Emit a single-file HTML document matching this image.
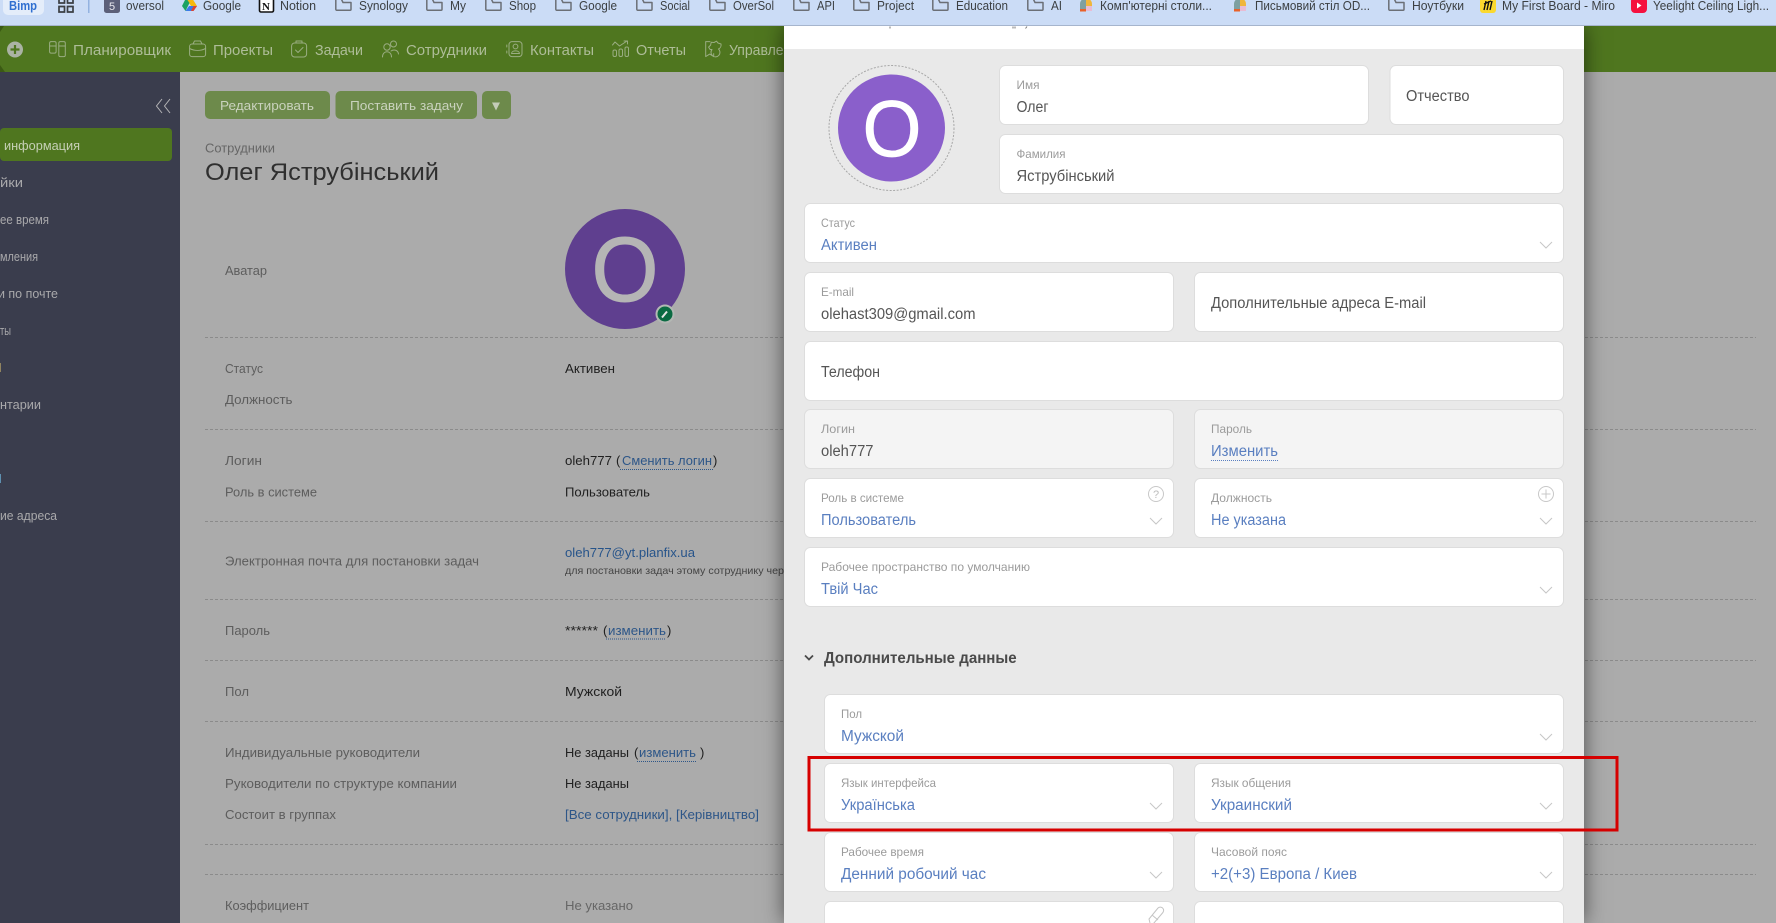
<!DOCTYPE html>
<html lang="ru">
<head>
<meta charset="utf-8">
<title>Сотрудник</title>
<style>
html,body{margin:0;padding:0;width:1776px;height:923px;overflow:hidden;background:#ababab}
svg{position:absolute;left:0;top:0;display:block}
text{font-family:"Liberation Sans","Noto Sans CJK SC",sans-serif}
#modal{position:absolute;left:784px;top:26px;width:800px;height:897px;background:#e9e9e9;box-shadow:0 0 20px rgba(0,0,0,.55)}
.bm{font-size:12.5px;fill:#3c4043}
.nav{font-size:15px;fill:#aebd98}
.ni{fill:none;stroke:#9aad82;stroke-width:1;stroke-linecap:round;stroke-linejoin:round}
.side{font-size:13px;fill:#a9a9ab}
.lab{font-size:13px;fill:#5d5d5d}
.val{font-size:13px;fill:#202020}
.lnk{font-size:13px;fill:#2d5688}
.f{fill:#fff;stroke:#dddddd;stroke-width:1}
.d{fill:#f4f4f4;stroke:#dddddd;stroke-width:1}
.fl{font-size:12px;fill:#9b9b9b}
.fv{font-size:15.5px;fill:#555}
.fb{font-size:15.5px;fill:#5a7fc0}
.ch{fill:none;stroke:#c6c6c6;stroke-width:1}
.dash{stroke:#8b8b8b;stroke-width:1;stroke-dasharray:3 2}
.fo{fill:none;stroke:#6b6f76;stroke-width:1.5;stroke-linejoin:round}
</style>
</head>
<body>
<svg width="1776" height="923" viewBox="0 0 1776 923">
<rect x="0" y="26" width="1776" height="46" fill="#4f761f"/>
<path d="M0 26h4l-4 6zM0 72h5l-5-7z" fill="#3b5a14"/>
<rect x="0" y="72" width="180" height="851" fill="#3a3d4d"/>
<circle cx="15" cy="49.5" r="8" fill="#abb3a4"/>
<path d="M15 45v9M10.500 49.500h9" stroke="#4f761f" stroke-width="2.200"/>

<g class="ni">
<rect x="49.600" y="41.600" width="6.500" height="11.500" rx="1.500"/><path d="M49.600 46h6.500"/>
<rect x="58.800" y="41.600" width="6.500" height="15" rx="1.500"/><path d="M58.800 46h6.500"/>
<path d="M193 44l1.500-3h6l1.500 3"/><rect x="189.600" y="44" width="16" height="12.600" rx="2.500"/><path d="M189.600 48.500c5 2.500 11 2.500 16 0"/>
<rect x="291.600" y="43" width="15" height="14" rx="3"/><path d="M296 43v-2h6v2M295.500 50l2.500 2.500 5-5"/>
<circle cx="393.500" cy="44" r="3"/><path d="M391 51c3-2 7-1 7.500 3"/><circle cx="387" cy="47" r="3.200"/><path d="M382.500 57c0-7 9-7 9 0"/>
<rect x="509" y="41.600" width="13" height="15" rx="3"/><circle cx="515.500" cy="46.500" r="2.400"/><path d="M511.500 53.500c0-3.500 8-3.500 8 0zM506.800 45v2M506.800 51v2"/>
<rect x="613" y="50" width="3.500" height="6.500" rx="1.500"/><rect x="619" y="49" width="3.500" height="7.500" rx="1.500"/><rect x="625" y="47" width="3.500" height="9.500" rx="1.500"/><path d="M612.500 45l2.500-3 4.500 4 7.500-5M624 41h3.500v3"/>
<path d="M710 41.600h-4.300v15l4-2.500 4 2.500v-3M712 49.500a4.500 4.500 0 1 0 6.500-.5 4.500 4.500 0 0 0 2.500-5l-3-1-1.500-1.800-2.500 1.300-2.800-.2-.6 2.800-2 2 1.500 2.400z"/>
</g>
<text class="nav" x="73" y="55" textLength="98" lengthAdjust="spacingAndGlyphs">Планировщик</text>
<text class="nav" x="213" y="55" textLength="60" lengthAdjust="spacingAndGlyphs">Проекты</text>
<text class="nav" x="315" y="55" textLength="48" lengthAdjust="spacingAndGlyphs">Задачи</text>
<text class="nav" x="406" y="55" textLength="81" lengthAdjust="spacingAndGlyphs">Сотрудники</text>
<text class="nav" x="530" y="55" textLength="64" lengthAdjust="spacingAndGlyphs">Контакты</text>
<text class="nav" x="636" y="55" textLength="50" lengthAdjust="spacingAndGlyphs">Отчеты</text>
<text class="nav" x="729" y="55" textLength="78" lengthAdjust="spacingAndGlyphs">Управление</text>

<path d="M162 99l-5.500 7 5.500 7M170 99l-5.500 7 5.500 7" fill="none" stroke="#b4b4b6" stroke-width="1"/>
<rect x="0" y="128" width="172" height="33" rx="4" fill="#4f761f"/>
<text class="side" x="4" y="150" textLength="76" lengthAdjust="spacingAndGlyphs" style="fill:#c6d0b6">информация</text>
<text class="side" x="0" y="187" textLength="23" lengthAdjust="spacingAndGlyphs">йки</text>
<text class="side" x="0" y="224" textLength="49" lengthAdjust="spacingAndGlyphs">ее время</text>
<text class="side" x="0" y="261" textLength="38" lengthAdjust="spacingAndGlyphs">мления</text>
<text class="side" x="-2" y="298" textLength="60" lengthAdjust="spacingAndGlyphs">и по почте</text>
<text class="side" x="0" y="335" textLength="11" lengthAdjust="spacingAndGlyphs">ты</text>
<rect x="0" y="363" width="1" height="9" fill="#8f8360"/>
<text class="side" x="0" y="409" textLength="41" lengthAdjust="spacingAndGlyphs">нтарии</text>
<rect x="0" y="474" width="1" height="9" fill="#5e90b0"/>
<text class="side" x="0" y="520" textLength="57" lengthAdjust="spacingAndGlyphs">ие адреса</text>

<rect x="205" y="91" width="125" height="28" rx="5" fill="#6d8a4b"/>
<rect x="335.500" y="91" width="141.500" height="28" rx="5" fill="#6d8a4b"/>
<rect x="482" y="91" width="29" height="28" rx="5" fill="#6d8a4b"/>
<text x="220" y="110" font-size="13" fill="#c9d2bd" textLength="94" lengthAdjust="spacingAndGlyphs">Редактировать</text>
<text x="350" y="110" font-size="13" fill="#c9d2bd" textLength="113" lengthAdjust="spacingAndGlyphs">Поставить задачу</text>
<path d="M492 102.500h8l-4 8z" fill="#c4ccb8"/>
<text x="205" y="152.500" font-size="13" fill="#666" textLength="70" lengthAdjust="spacingAndGlyphs">Сотрудники</text>
<text x="205" y="180" font-size="24.500" fill="#2f2f2f" textLength="234" lengthAdjust="spacingAndGlyphs">Олег Яструбінський</text>

<circle cx="625" cy="269" r="60" fill="#5f3f8f"/>
<text x="625" y="301" font-size="92" fill="#b5b5b5" stroke="#b5b5b5" stroke-width="1" text-anchor="middle" textLength="67" lengthAdjust="spacingAndGlyphs">O</text>
<circle cx="665" cy="314" r="9.500" fill="#b3b8b4"/>
<circle cx="665" cy="314" r="7.500" fill="#0a6a42"/>
<path d="M662 317.500l5-6" stroke="#e5e5e5" stroke-width="2"/>

<g class="dash">
<path d="M205 337.500H1756M205 429.500H1756M205 521.500H1756M205 599.500H1756M205 660.500H1756M205 721.500H1756M205 844.500H1756M205 874.500H1756"/>
</g>
<text class="lab" x="225" y="275" textLength="42" lengthAdjust="spacingAndGlyphs">Аватар</text>
<text class="lab" x="225" y="373" textLength="38" lengthAdjust="spacingAndGlyphs">Статус</text>
<text class="lab" x="225" y="404" textLength="67.500" lengthAdjust="spacingAndGlyphs">Должность</text>
<text class="lab" x="225" y="465" textLength="37" lengthAdjust="spacingAndGlyphs">Логин</text>
<text class="lab" x="225" y="496.500" textLength="92" lengthAdjust="spacingAndGlyphs">Роль в системе</text>
<text class="lab" x="225" y="565.500" textLength="254" lengthAdjust="spacingAndGlyphs">Электронная почта для постановки задач</text>
<text class="lab" x="225" y="635" textLength="45" lengthAdjust="spacingAndGlyphs">Пароль</text>
<text class="lab" x="225" y="696" textLength="24" lengthAdjust="spacingAndGlyphs">Пол</text>
<text class="lab" x="225" y="757" textLength="195" lengthAdjust="spacingAndGlyphs">Индивидуальные руководители</text>
<text class="lab" x="225" y="788" textLength="232" lengthAdjust="spacingAndGlyphs">Руководители по структуре компании</text>
<text class="lab" x="225" y="819" textLength="111" lengthAdjust="spacingAndGlyphs">Состоит в группах</text>
<text class="lab" x="225" y="910" textLength="84" lengthAdjust="spacingAndGlyphs">Коэффициент</text>

<text class="val" x="565" y="373" textLength="50" lengthAdjust="spacingAndGlyphs">Активен</text>
<text class="val" x="565" y="465" textLength="47" lengthAdjust="spacingAndGlyphs">oleh777</text>
<text class="val" x="616" y="465">(</text>
<text class="lnk" x="622" y="465" textLength="90" lengthAdjust="spacingAndGlyphs">Сменить логин</text>
<path d="M620 469.500h93" stroke="#2d5688" stroke-width="1" stroke-dasharray="1 1"/>
<text class="val" x="713" y="465">)</text>
<text class="val" x="565" y="496.500" textLength="85" lengthAdjust="spacingAndGlyphs">Пользователь</text>
<text class="lnk" x="565" y="557" textLength="130" lengthAdjust="spacingAndGlyphs" style="fill:#27548a">oleh777@yt.planfix.ua</text>
<text x="565" y="574" font-size="10.500" fill="#444" textLength="219" lengthAdjust="spacingAndGlyphs">для постановки задач этому сотруднику чер</text>
<text class="val" x="565" y="635" textLength="33" lengthAdjust="spacingAndGlyphs">******</text>
<text class="val" x="603" y="635">(</text>
<text class="lnk" x="608" y="635" textLength="58" lengthAdjust="spacingAndGlyphs">изменить</text>
<path d="M606 639h60" stroke="#2d5688" stroke-width="1" stroke-dasharray="1 1"/>
<text class="val" x="667" y="635">)</text>
<text class="val" x="565" y="696" textLength="57" lengthAdjust="spacingAndGlyphs">Мужской</text>
<text class="val" x="565" y="757" textLength="64" lengthAdjust="spacingAndGlyphs">Не заданы</text>
<text class="val" x="634" y="757">(</text>
<text class="lnk" x="639" y="757" textLength="57" lengthAdjust="spacingAndGlyphs">изменить</text>
<path d="M637 761.500h59" stroke="#2d5688" stroke-width="1" stroke-dasharray="1 1"/>
<text class="val" x="700" y="757">)</text>
<text class="val" x="565" y="788" textLength="64" lengthAdjust="spacingAndGlyphs">Не заданы</text>
<text class="lnk" x="565" y="819" textLength="194" lengthAdjust="spacingAndGlyphs">[Все сотрудники], [Керівництво]</text>
<text class="val" x="565" y="910" textLength="68" lengthAdjust="spacingAndGlyphs" style="fill:#666">Не указано</text>
</svg>

<div id="modal"></div>

<svg width="1776" height="923" viewBox="0 0 1776 923">
<defs>
<g id="folder"><path class="fo" d="M.8-2V9.300a1 1 0 0 0 1 1H15a1 1 0 0 0 1-1V2.500H8L5.800-2"/></g>
<path id="chev" class="ch" d="M0 0l6 6 6-6"/>
</defs>

<rect x="0" y="0" width="1776" height="25" fill="#cbdcf6"/>
<rect x="0" y="25" width="1776" height="1" fill="#a6b5cd"/>
<rect x="3" y="-6" width="41" height="21" rx="5" fill="#e4edfa"/>
<text x="9" y="10" font-size="12.500" font-weight="bold" fill="#2f6fd0" textLength="28" lengthAdjust="spacingAndGlyphs">Bimp</text>
<path d="M59-2h5.500v5H59zM67.500-2H73v5h-5.500zM59 6.500h5.500V12H59zM67.500 6.500H73V12h-5.500z" fill="none" stroke="#3b3f44" stroke-width="1.700"/>
<rect x="88" y="0" width="1.500" height="13" fill="#93b2e0"/>
<rect x="104" y="-4" width="16" height="17" rx="2.500" fill="#5c6079"/>
<text x="109" y="10" font-size="11" fill="#e8e8ee">5</text>
<text class="bm" x="126" y="10" textLength="38" lengthAdjust="spacingAndGlyphs">oversol</text>
<path d="M186-2h6l5 8h-6z" fill="#f6b90f"/><path d="M186-2l-4 8 3.500 5 4-8z" fill="#1ca261"/><path d="M185.500 11h8l3.500-5h-8z" fill="#3b7be8"/><path d="M191 11h2.500l3.500-5h-3.500z" fill="#e0432f"/>
<text class="bm" x="203" y="10" textLength="38" lengthAdjust="spacingAndGlyphs">Google</text>
<rect x="259.500" y="-2" width="14" height="14" rx="1.500" fill="#fff" stroke="#111" stroke-width="1.600"/>
<text x="262" y="10" font-size="11" font-weight="bold" fill="#111" style="font-family:'Liberation Serif',serif">N</text>
<text class="bm" x="280" y="10" textLength="36" lengthAdjust="spacingAndGlyphs">Notion</text>

<use href="#folder" x="335" y="0"/><text class="bm" x="359" y="10" textLength="49" lengthAdjust="spacingAndGlyphs">Synology</text>
<use href="#folder" x="426" y="0"/><text class="bm" x="450" y="10" textLength="16" lengthAdjust="spacingAndGlyphs">My</text>
<use href="#folder" x="485" y="0"/><text class="bm" x="509" y="10" textLength="27" lengthAdjust="spacingAndGlyphs">Shop</text>
<use href="#folder" x="555" y="0"/><text class="bm" x="579" y="10" textLength="38" lengthAdjust="spacingAndGlyphs">Google</text>
<use href="#folder" x="636" y="0"/><text class="bm" x="660" y="10" textLength="30" lengthAdjust="spacingAndGlyphs">Social</text>
<use href="#folder" x="709" y="0"/><text class="bm" x="733" y="10" textLength="41" lengthAdjust="spacingAndGlyphs">OverSol</text>
<use href="#folder" x="793" y="0"/><text class="bm" x="817" y="10" textLength="18" lengthAdjust="spacingAndGlyphs">API</text>
<use href="#folder" x="853" y="0"/><text class="bm" x="877" y="10" textLength="37" lengthAdjust="spacingAndGlyphs">Project</text>
<use href="#folder" x="932" y="0"/><text class="bm" x="956" y="10" textLength="52" lengthAdjust="spacingAndGlyphs">Education</text>
<use href="#folder" x="1027" y="0"/><text class="bm" x="1051" y="10" textLength="11" lengthAdjust="spacingAndGlyphs">AI</text>
<g><path d="M1080 11V4a6 6 0 0 1 6-6v13z" fill="#7ea0a0"/><path d="M1086-2a6 6 0 0 1 6 6v2h-6z" fill="#efb63c"/><rect x="1086" y="6" width="6" height="5" fill="#e8bcd4"/><rect x="1080" y="9" width="6" height="2.500" fill="#e8622a"/></g>
<text class="bm" x="1100" y="10" textLength="112" lengthAdjust="spacingAndGlyphs">Комп'ютерні столи...</text>
<g><path d="M1234 11V4a6 6 0 0 1 6-6v13z" fill="#7ea0a0"/><path d="M1240-2a6 6 0 0 1 6 6v2h-6z" fill="#efb63c"/><rect x="1240" y="6" width="6" height="5" fill="#e8bcd4"/><rect x="1234" y="9" width="6" height="2.500" fill="#e8622a"/></g>
<text class="bm" x="1255" y="10" textLength="115" lengthAdjust="spacingAndGlyphs">Письмовий стіл OD...</text>
<use href="#folder" x="1388" y="0"/><text class="bm" x="1412" y="10" textLength="52" lengthAdjust="spacingAndGlyphs">Ноутбуки</text>
<rect x="1480" y="-3" width="16" height="16" rx="3" fill="#fbd92f"/>
<path d="M1484 10l2-9M1487 10l2-9M1490 10l2-9M1484 4l7-3" stroke="#111" stroke-width="1.400" fill="none"/>
<text class="bm" x="1502" y="10" textLength="113" lengthAdjust="spacingAndGlyphs">My First Board - Miro</text>
<rect x="1631" y="-3" width="16" height="16" rx="4" fill="#f5113f"/>
<path d="M1637 2.500l4.500 3-4.500 3z" fill="#fff"/>
<text class="bm" x="1653" y="10" textLength="116" lengthAdjust="spacingAndGlyphs">Yeelight Ceiling Ligh...</text>

<rect x="784" y="26" width="800" height="23" fill="#fff"/>
<path d="M890 26.500v2M1013 26.500v2M1015 26.500v2M1027 26.500l-1.500 2" stroke="#777" stroke-width="1"/>

<circle cx="891.500" cy="128" r="62.500" fill="none" stroke="#a8a8a8" stroke-width="1" stroke-dasharray="2 1.500"/>
<circle cx="891.500" cy="128" r="53.500" fill="#8a5fcb"/>
<text x="892" y="156" font-size="80" fill="#fff" stroke="#fff" stroke-width=".7" text-anchor="middle" textLength="59" lengthAdjust="spacingAndGlyphs">O</text>

<rect class="f" x="999.500" y="65.500" width="369" height="59" rx="6"/>
<rect class="f" x="1390" y="65.500" width="173.500" height="59" rx="6"/>
<rect class="f" x="999.500" y="134.500" width="564" height="59" rx="6"/>
<rect class="f" x="804.500" y="203.500" width="759" height="59" rx="6"/>
<rect class="f" x="804.500" y="272.500" width="369" height="59" rx="6"/>
<rect class="f" x="1194.500" y="272.500" width="369" height="59" rx="6"/>
<rect class="f" x="804.500" y="341.500" width="759" height="59" rx="6"/>
<rect class="d" x="804.500" y="409.500" width="369" height="59" rx="6"/>
<rect class="d" x="1194.500" y="409.500" width="369" height="59" rx="6"/>
<rect class="f" x="804.500" y="478.500" width="369" height="59" rx="6"/>
<rect class="f" x="1194.500" y="478.500" width="369" height="59" rx="6"/>
<rect class="f" x="804.500" y="547.500" width="759" height="59" rx="6"/>
<rect class="f" x="824.500" y="694.500" width="739" height="59" rx="6"/>
<rect class="f" x="824.500" y="763.500" width="349" height="59" rx="6"/>
<rect class="f" x="1194.500" y="763.500" width="369" height="59" rx="6"/>
<rect class="f" x="824.500" y="832.500" width="349" height="59" rx="6"/>
<rect class="f" x="1194.500" y="832.500" width="369" height="59" rx="6"/>
<rect class="f" x="824.500" y="901.500" width="349" height="59" rx="6"/>
<rect class="f" x="1194.500" y="901.500" width="369" height="59" rx="6"/>

<text class="fl" x="1016.500" y="89" textLength="23" lengthAdjust="spacingAndGlyphs">Имя</text>
<text class="fv" x="1016.500" y="112" textLength="32" lengthAdjust="spacingAndGlyphs">Олег</text>
<text class="fv" x="1406" y="101" textLength="63.500" lengthAdjust="spacingAndGlyphs">Отчество</text>
<text class="fl" x="1016.500" y="158" textLength="49" lengthAdjust="spacingAndGlyphs">Фамилия</text>
<text class="fv" x="1016.500" y="181" textLength="98" lengthAdjust="spacingAndGlyphs">Яструбінський</text>
<text class="fl" x="821" y="227" textLength="34" lengthAdjust="spacingAndGlyphs">Статус</text>
<text class="fb" x="821" y="250" textLength="56" lengthAdjust="spacingAndGlyphs">Активен</text>
<text class="fl" x="821" y="296" textLength="33" lengthAdjust="spacingAndGlyphs">E-mail</text>
<text class="fv" x="821" y="319" textLength="154.500" lengthAdjust="spacingAndGlyphs">olehast309@gmail.com</text>
<text class="fv" x="1211" y="308" textLength="215" lengthAdjust="spacingAndGlyphs">Дополнительные адреса E-mail</text>
<text class="fv" x="821" y="377" textLength="59" lengthAdjust="spacingAndGlyphs">Телефон</text>
<text class="fl" x="821" y="433" textLength="34" lengthAdjust="spacingAndGlyphs">Логин</text>
<text class="fv" x="821" y="456" textLength="52.500" lengthAdjust="spacingAndGlyphs">oleh777</text>
<text class="fl" x="1211" y="433" textLength="41" lengthAdjust="spacingAndGlyphs">Пароль</text>
<text class="fb" x="1211" y="456" textLength="67" lengthAdjust="spacingAndGlyphs">Изменить</text>
<path d="M1211 460.500h67" stroke="#5a7fc0" stroke-width="1" stroke-dasharray="1 1"/>
<text class="fl" x="821" y="502" textLength="83" lengthAdjust="spacingAndGlyphs">Роль в системе</text>
<text class="fb" x="821" y="525" textLength="95" lengthAdjust="spacingAndGlyphs">Пользователь</text>
<text class="fl" x="1211" y="502" textLength="61" lengthAdjust="spacingAndGlyphs">Должность</text>
<text class="fb" x="1211" y="525" textLength="75" lengthAdjust="spacingAndGlyphs">Не указана</text>
<text class="fl" x="821" y="571" textLength="209" lengthAdjust="spacingAndGlyphs">Рабочее пространство по умолчанию</text>
<text class="fb" x="821" y="594" textLength="57" lengthAdjust="spacingAndGlyphs">Твій Час</text>

<path d="M805 655.500l4 4 4-4" fill="none" stroke="#4a4a4a" stroke-width="1.800"/>
<text x="824" y="663" font-size="15.500" font-weight="bold" fill="#4a4a4a" textLength="192.700" lengthAdjust="spacingAndGlyphs">Дополнительные данные</text>

<text class="fl" x="841" y="718" textLength="21" lengthAdjust="spacingAndGlyphs">Пол</text>
<text class="fb" x="841" y="741" textLength="63" lengthAdjust="spacingAndGlyphs">Мужской</text>
<text class="fl" x="841" y="787" textLength="95" lengthAdjust="spacingAndGlyphs">Язык интерфейса</text>
<text class="fb" x="841" y="810" textLength="74" lengthAdjust="spacingAndGlyphs">Українська</text>
<text class="fl" x="1211" y="787" textLength="80" lengthAdjust="spacingAndGlyphs">Язык общения</text>
<text class="fb" x="1211" y="810" textLength="81" lengthAdjust="spacingAndGlyphs">Украинский</text>
<text class="fl" x="841" y="856" textLength="83" lengthAdjust="spacingAndGlyphs">Рабочее время</text>
<text class="fb" x="841" y="879" textLength="145" lengthAdjust="spacingAndGlyphs">Денний робочий час</text>
<text class="fl" x="1211" y="856" textLength="76" lengthAdjust="spacingAndGlyphs">Часовой пояс</text>
<text class="fb" x="1211" y="879" textLength="146" lengthAdjust="spacingAndGlyphs">+2(+3) Европа / Киев</text>

<use href="#chev" x="1540" y="242"/>
<use href="#chev" x="1150" y="518"/>
<use href="#chev" x="1540" y="518"/>
<use href="#chev" x="1540" y="587"/>
<use href="#chev" x="1540" y="734"/>
<use href="#chev" x="1150" y="803"/>
<use href="#chev" x="1540" y="803"/>
<use href="#chev" x="1150" y="872"/>
<use href="#chev" x="1540" y="872"/>

<circle cx="1156" cy="494" r="7.500" fill="none" stroke="#c8c8c8" stroke-width="1"/>
<text x="1156" y="498" font-size="11" fill="#bdbdbd" text-anchor="middle">?</text>
<circle cx="1546" cy="494" r="7.500" fill="none" stroke="#c8c8c8" stroke-width="1"/>
<path d="M1546 489.500v9M1541.500 494h9" stroke="#c8c8c8" stroke-width="1"/>
<path d="M1150 923l-1-4 9-11c1.500-1.500 4-1 5 .5s.8 3-.5 4.500l-9 10.500M1152 915l6 5" fill="none" stroke="#c4c4c4" stroke-width="1"/>

<rect x="809" y="757.500" width="808" height="72.500" fill="none" stroke="#d60000" stroke-width="3"/>
</svg>
</body>
</html>
